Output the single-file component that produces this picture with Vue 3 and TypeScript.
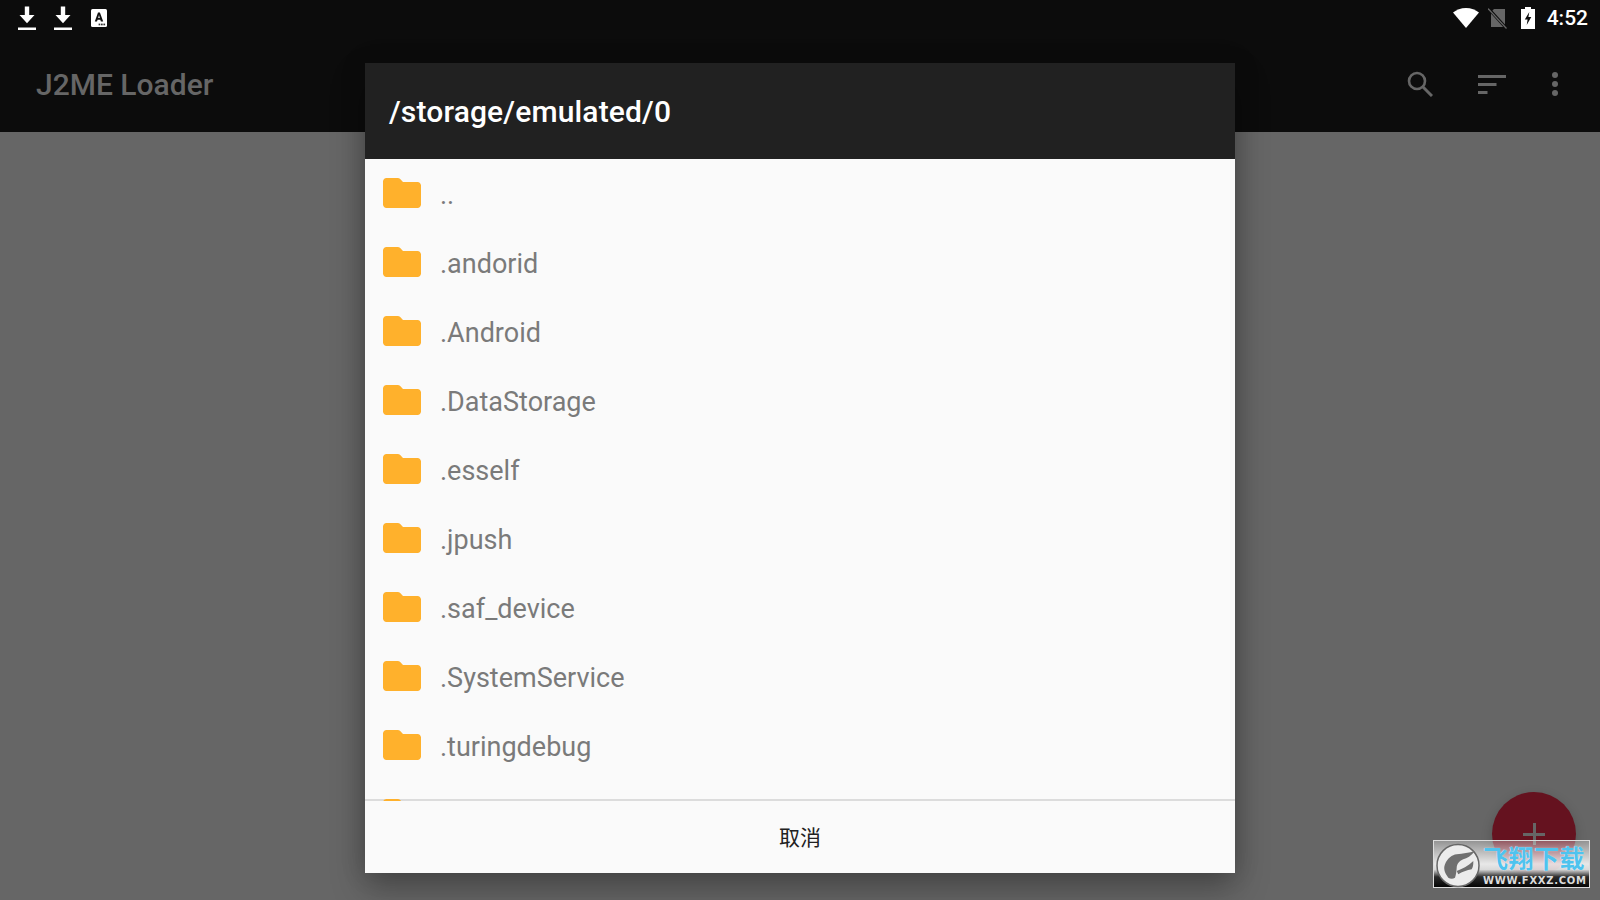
<template>
  <div class="screen">
    <header class="appbar">
      <div class="status">
        <div class="status-left">
          <svg v-for="n in 2" :key="n" class="dl" width="18" height="24" viewBox="0 0 18 24">
            <path d="M6.800 0.500h4.400v8.500h5.300L9 17.200 1.500 9h5.300z" fill="#fff" />
            <rect x="0" y="21.500" width="18" height="2.500" fill="#fff" />
          </svg>
          <svg class="kbd" width="16" height="18" viewBox="0 0 16 18">
            <rect width="16" height="18" rx="1.500" fill="#fff" />
            <path d="M3.800 12.500 7 3.600h1.900l3.300 8.900H9.900l-.6-1.800H6.600l-.6 1.800zM7.200 9h1.600l-.8-2.900z" fill="#111" />
            <rect x="7.600" y="14.600" width="1.700" height="1.700" fill="#333" />
            <rect x="10" y="14.600" width="1.700" height="1.700" fill="#333" />
            <rect x="12.400" y="14.600" width="1.700" height="1.700" fill="#333" />
          </svg>
        </div>
        <div class="status-right">
          <svg width="26" height="20" viewBox="0 0 26 20">
            <path d="M13 20 0 4.600C3.400 1.900 8 0 13 0s9.600 1.900 13 4.600z" fill="#fff" />
          </svg>
          <svg class="nosim" width="19" height="21" viewBox="0 0 19 21">
            <path d="M6 1h11v18H3V4z" fill="#666" />
            <path d="M0 0 19 21" stroke="#0c0c0c" stroke-width="3" />
            <path d="M0 0.500 18.500 20.500" stroke="#666" stroke-width="1.200" />
          </svg>
          <svg class="battery" width="14" height="22" viewBox="0 0 14 22">
            <path d="M4 0h6v2h4v20H0V2h4z" fill="#fff" />
            <path d="M8.300 5 3.800 12.500h2.800L5.700 18l4.600-8H7.400z" fill="#0c0c0c" />
          </svg>
          <span class="clock">4:52</span>
        </div>
      </div>
      <div class="toolbar">
        <span class="app-title">J2ME Loader</span>
        <div class="actions">
          <svg width="26" height="26" viewBox="0 0 26 26" fill="none" stroke="#666">
            <circle cx="10" cy="10" r="8" stroke-width="2.600" />
            <path d="M15.500 15.500 25 25" stroke-width="3" />
          </svg>
          <svg class="sort" width="28" height="19" viewBox="0 0 28 19" fill="#666">
            <rect width="28" height="3" />
            <rect y="8" width="18.500" height="3" />
            <rect y="16" width="9.500" height="3" />
          </svg>
          <svg class="more" width="6" height="24" viewBox="0 0 6 24" fill="#666">
            <circle cx="3" cy="3" r="3" />
            <circle cx="3" cy="12" r="3" />
            <circle cx="3" cy="21" r="3" />
          </svg>
        </div>
      </div>
    </header>

    <main class="content"></main>

    <div class="fab"><span class="fab-plus"></span></div>

    <section class="dialog">
      <h1 class="dialog-title">/storage/emulated/0</h1>
      <ul class="files">
        <li v-for="(name, i) in files" :key="i" class="file">
          <svg class="folder" width="38" height="30" viewBox="0 0 38 30">
            <path d="M3.500 0h11.200c1 0 1.800.4 2.500 1.100L20 4h14.500c1.900 0 3.500 1.600 3.500 3.500v19c0 1.900-1.600 3.500-3.500 3.500h-31C1.600 30 0 28.400 0 26.500v-23C0 1.600 1.600 0 3.500 0z" fill="#ffb12c" />
          </svg>
          <span v-if="name" class="file-name">{{ name }}</span>
        </li>
      </ul>
      <footer class="dialog-actions">
        <span class="cancel">取消</span>
      </footer>
    </section>

    <div class="watermark">
      <svg class="wm-logo" width="46" height="46" viewBox="0 0 46 46">
        <circle cx="23" cy="22.500" r="21" fill="#ececec" stroke="#666" stroke-width="1.500" />
        <path d="M13.300 34.700C9 29 8.500 25 10 21.300 12.500 15 17 12 21.700 11.300 28 10.500 34 10 40 8 36 13 32 15.500 28.300 16.300 24 18 22 21 21.700 24.700 21.500 28 21 32 20 34.700 18 36 15.500 36 13.300 34.700z" fill="#707070" />
        <path d="M21.700 28C27 26 33 23 38.300 18 38.500 22 37.800 24.500 36.700 26.300 32 27 27 29 23.300 31.300z" fill="#707070" />
      </svg>
      <div class="wm-text">
        <span class="wm-cn">飞翔下载</span>
        <span class="wm-url">WWW.FXXZ.COM</span>
      </div>
    </div>
  </div>
</template>

<script setup lang="ts">
// last entry only peeks above the divider, its name is hidden in the reference
const files: string[] = [
  "..",
  ".andorid",
  ".Android",
  ".DataStorage",
  ".esself",
  ".jpush",
  ".saf_device",
  ".SystemService",
  ".turingdebug",
  "",
];
</script>

<style>
html,
body {
  margin: 0;
  background: #666;
}
</style>

<style scoped>
.screen {
  position: relative;
  width: 1600px;
  height: 900px;
  overflow: hidden;
  display: flex;
  flex-direction: column;
  background: #666;
  font-family: Roboto, "Noto Sans CJK SC", sans-serif;
}

.appbar {
  height: 132px;
  flex: none;
  background: #0c0c0c;
  display: flex;
  flex-direction: column;
}

.status {
  height: 36px;
  flex: none;
  display: flex;
  align-items: center;
  justify-content: space-between;
  padding: 0 12px 0 18px;
}

.status-left {
  display: flex;
  align-items: center;
  gap: 18px;
}

.kbd {
  margin-left: 1px;
}

.status-right {
  display: flex;
  align-items: center;
}

.nosim {
  margin-left: 9px;
}

.battery {
  margin-left: 14px;
}

.clock {
  margin-left: 12px;
  color: #fff;
  font-size: 21px;
  font-weight: 500;
}

.toolbar {
  flex: 1;
  display: flex;
  align-items: center;
  justify-content: space-between;
  padding: 0 42px 0 36px;
}

.app-title {
  color: #666;
  font-size: 30px;
  font-weight: 500;
}

.actions {
  display: flex;
  align-items: center;
}

.sort {
  margin-left: 45px;
}

.more {
  margin-left: 46px;
}

.content {
  flex: 1;
}

.fab {
  position: absolute;
  left: 1492px;
  top: 792px;
  width: 84px;
  height: 84px;
  border-radius: 50%;
  background: #65121f;
  box-shadow: 0 4px 12px rgba(0, 0, 0, 0.2);
}

.fab-plus {
  position: absolute;
  left: 31px;
  top: 31px;
  width: 22px;
  height: 22px;
  background:
    linear-gradient(#666, #666) center / 22px 3px no-repeat,
    linear-gradient(#666, #666) center / 3px 22px no-repeat;
}

.dialog {
  position: absolute;
  left: 365px;
  top: 63px;
  width: 870px;
  height: 810px;
  display: flex;
  flex-direction: column;
  background: #fafafa;
  box-shadow: 0 16px 32px rgba(0, 0, 0, 0.28), 0 0 24px rgba(0, 0, 0, 0.16);
}

.dialog-title {
  margin: 0;
  height: 96px;
  flex: none;
  box-sizing: border-box;
  padding: 0 24px;
  display: flex;
  align-items: center;
  background: #212121;
  color: #fff;
  font-size: 30px;
  font-weight: 500;
  letter-spacing: 0.15px;
}

.files {
  position: relative;
  z-index: 1;
  list-style: none;
  margin: 0;
  padding: 0;
  flex: 1;
  min-height: 0;
  overflow: hidden;
}

.file {
  height: 69px;
  display: flex;
  align-items: center;
  padding-left: 18px;
}

.folder {
  flex: none;
  margin-bottom: 1px;
}

.file-name {
  margin-left: 19px;
  padding-top: 2px;
  color: #7a7a7a;
  font-size: 27px;
}

.dialog-actions {
  height: 74px;
  flex: none;
  margin-top: -2px;
  border-top: 2px solid #dcdcdc;
  box-sizing: border-box;
  padding-bottom: 2px;
  display: flex;
  align-items: center;
  justify-content: center;
}

.cancel {
  color: #212121;
  font-size: 21px;
}

.watermark {
  position: absolute;
  left: 1433px;
  top: 840px;
  width: 157px;
  height: 48px;
  box-sizing: border-box;
  display: flex;
  border: 1px solid #ddd;
  background: linear-gradient(rgba(255, 255, 255, 0.3) 0%, rgba(255, 255, 255, 0.85) 50%, rgba(230, 230, 230, 0.9) 62%, #2a2a2a 78%, #050505 100%);
}

.wm-logo {
  flex: none;
  margin-left: 1px;
  margin-top: 2px;
}

.wm-text {
  display: flex;
  flex-direction: column;
  align-items: flex-start;
  margin-left: 2px;
}

.wm-cn {
  color: #4fc3ee;
  font-size: 25px;
  font-weight: 700;
  line-height: 28px;
  margin-top: 5px;
  letter-spacing: 0.5px;
  white-space: nowrap;
  text-shadow: 0 0 1px #fff;
}

.wm-url {
  color: #ddd;
  font-family: "DejaVu Sans", sans-serif;
  font-size: 10px;
  font-weight: 700;
  line-height: 14px;
  letter-spacing: 0.7px;
  white-space: nowrap;
}
</style>
